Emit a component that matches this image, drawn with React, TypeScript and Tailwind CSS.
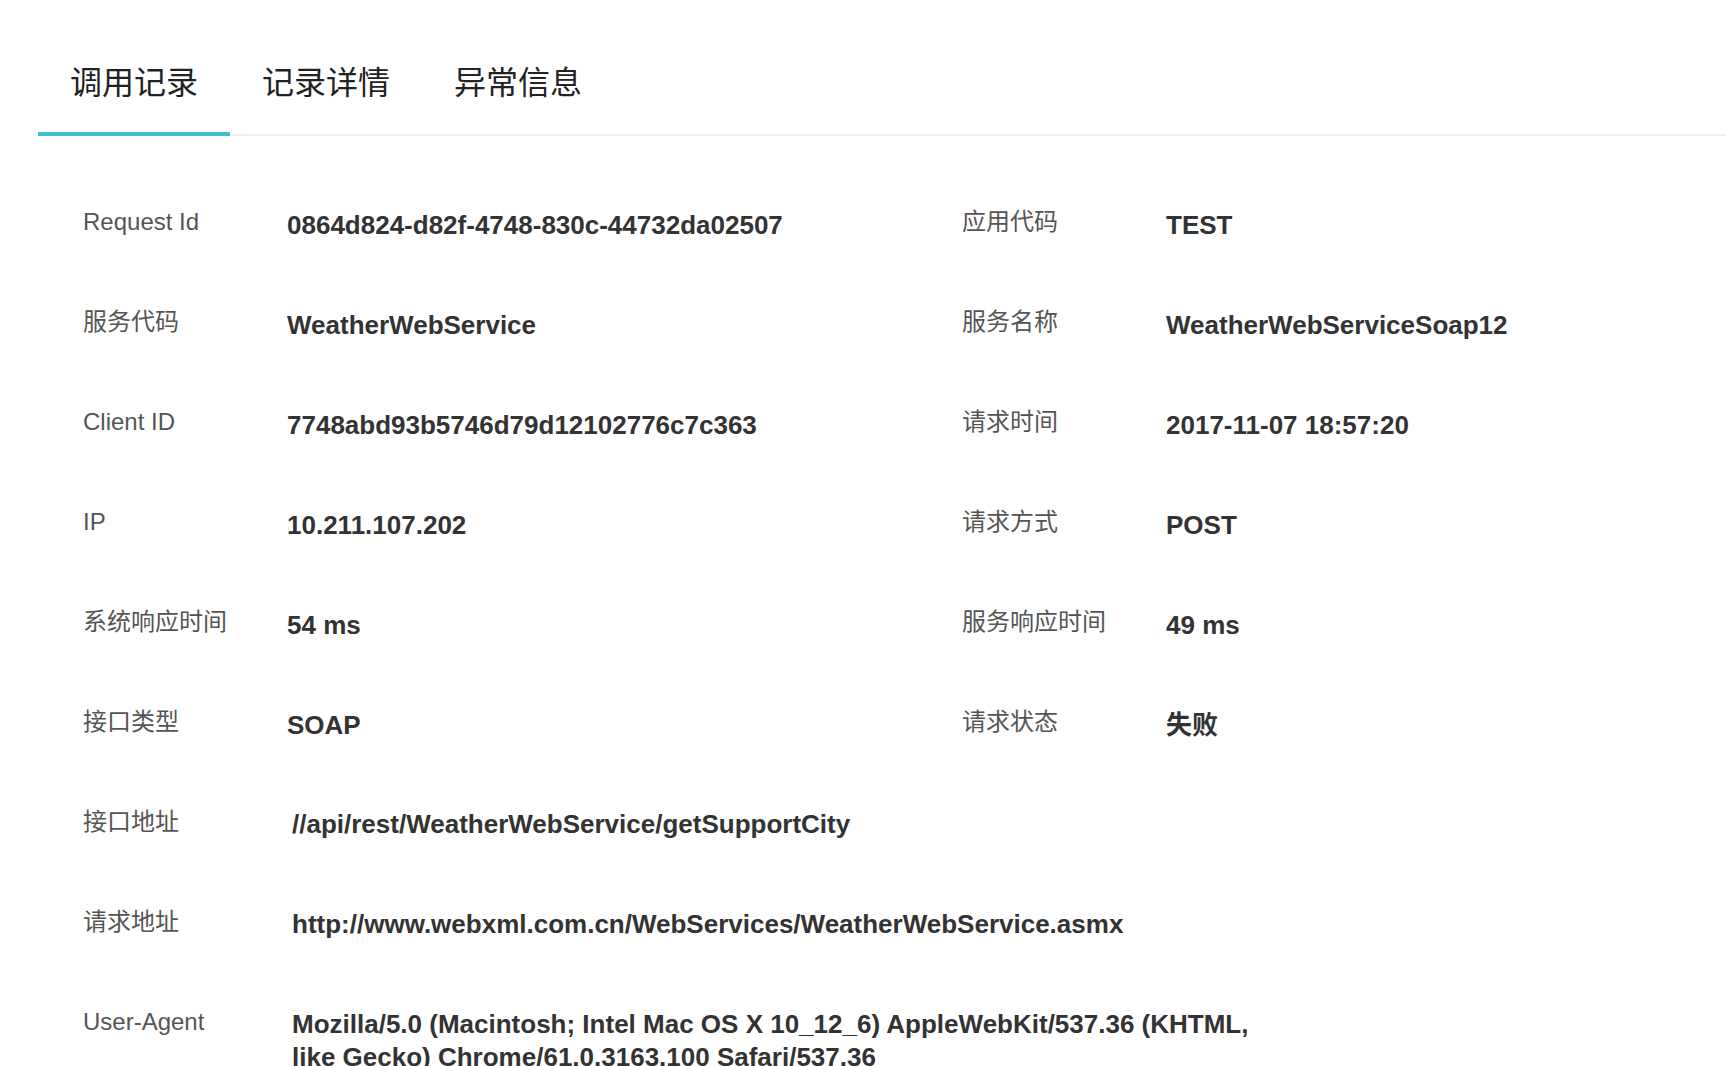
import React from 'react';

const tabs = ['调用记录', '记录详情', '异常信息'];

const pairs: [string, string, string, string][] = [
  ['Request Id', '0864d824-d82f-4748-830c-44732da02507', '应用代码', 'TEST'],
  ['服务代码', 'WeatherWebService', '服务名称', 'WeatherWebServiceSoap12'],
  ['Client ID', '7748abd93b5746d79d12102776c7c363', '请求时间', '2017-11-07 18:57:20'],
  ['IP', '10.211.107.202', '请求方式', 'POST'],
  ['系统响应时间', '54 ms', '服务响应时间', '49 ms'],
  ['接口类型', 'SOAP', '请求状态', '失败'],
];

const wide: [string, string][] = [
  ['接口地址', '//api/rest/WeatherWebService/getSupportCity'],
  ['请求地址', 'http://www.webxml.com.cn/WebServices/WeatherWebService.asmx'],
  [
    'User-Agent',
    'Mozilla/5.0 (Macintosh; Intel Mac OS X 10_12_6) AppleWebKit/537.36 (KHTML, like Gecko) Chrome/61.0.3163.100 Safari/537.36',
  ],
];

function Label({ text }: { text: string }) {
  return <div className="w-[204px] shrink-0 text-[24px] leading-[30px] text-[#555555]">{text}</div>;
}

function Value({ text, className = '' }: { text: string; className?: string }) {
  return (
    <div className={`mt-[3px] text-[26px] leading-[30px] font-bold text-[#333333] ${className}`}>{text}</div>
  );
}

export default function App() {
  const [active, setActive] = React.useState(0);

  return (
    <div className="min-h-screen bg-white pt-[67px] font-['Liberation_Sans','Noto_Sans_CJK_SC',sans-serif]">
      {/* tabs */}
      <div className="ml-[38px] flex border-b-2 border-[#eeeeee]">
        {tabs.map((t, i) => (
          <button
            key={t}
            onClick={() => setActive(i)}
            className={`-mb-[2px] w-[192px] pb-[33px] text-center text-[32px] leading-none text-[#222222] border-b-4 ${
              active === i ? 'border-[#3ec1cd]' : 'border-transparent'
            }`}
          >
            {t}
          </button>
        ))}
      </div>

      {/* details */}
      <div className="pl-[83px] pt-[71px]">
        <div className="grid grid-cols-[879px_1fr]">
          {pairs.map(([l1, v1, l2, v2]) => (
            <React.Fragment key={l1}>
              <div className="flex h-[100px] items-start">
                <Label text={l1} />
                <Value text={v1} />
              </div>
              <div className="flex h-[100px] items-start">
                <Label text={l2} />
                <Value text={v2} />
              </div>
            </React.Fragment>
          ))}
          {wide.map(([l, v]) => (
            <div key={l} className="col-span-2 flex min-h-[100px] items-start">
              <Label text={l} />
              <Value text={v} className="ml-[5px] max-w-[975px] !leading-[33px] !mt-[1px]" />
            </div>
          ))}
        </div>
      </div>
    </div>
  );
}
